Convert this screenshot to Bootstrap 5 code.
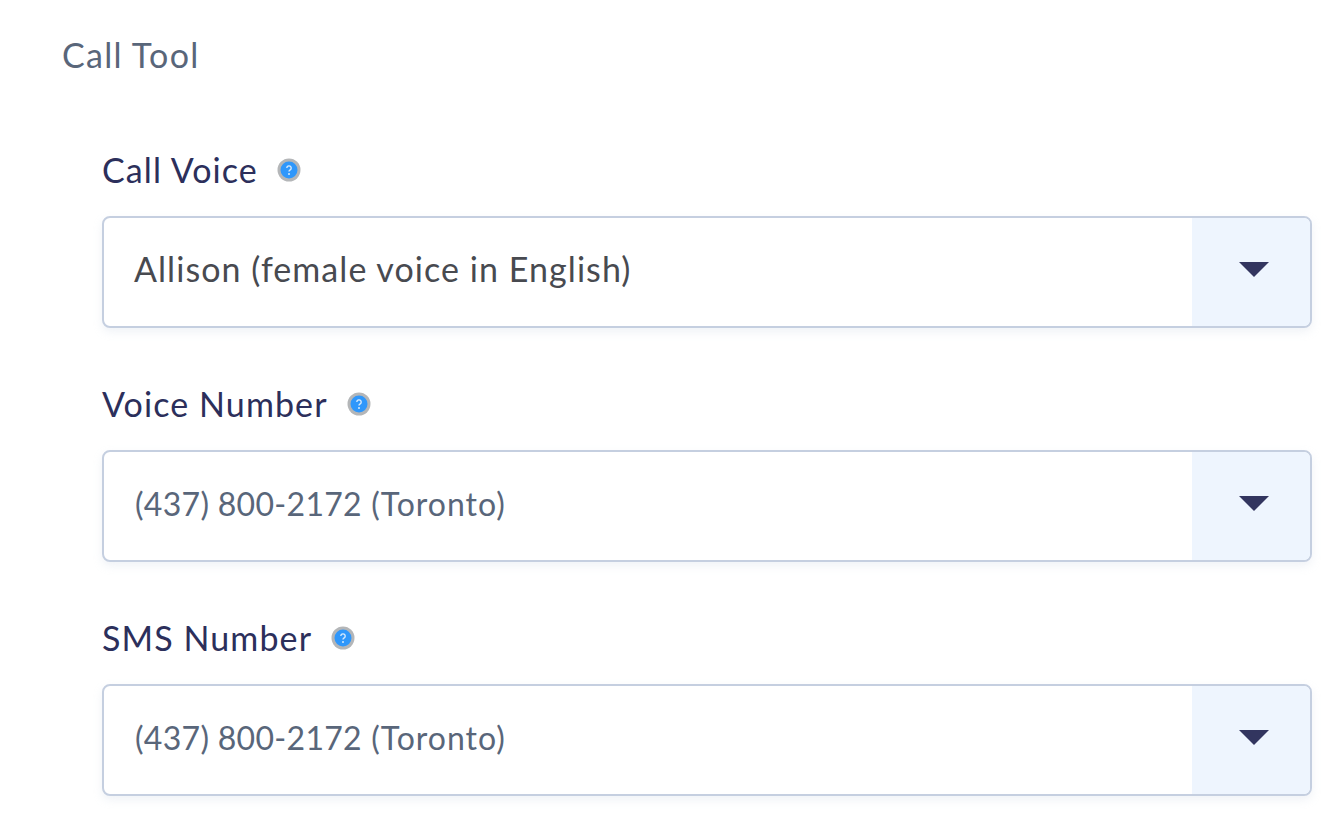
<!DOCTYPE html>
<html lang="en">
<head>
<meta charset="utf-8">
<title>Call Tool</title>
<link href="https://cdn.jsdelivr.net/npm/bootstrap@5.3.0/dist/css/bootstrap.min.css" rel="stylesheet">
<style>
html, body { height: 100%; }
body { font-family: Lato, "Open Sans", sans-serif; background: #fff; overflow: hidden; }
.tool-wrap { padding: 33px 32px 0 62px; }
.tool-title { font-size: 34px; line-height: 44px; font-weight: 400; color: #59667a; margin: 0 0 71px; letter-spacing: 1.3px; }
.tool-fields { margin-left: 40px; }
.field-block { margin-bottom: 54px; }
.field-head { height: 44px; margin-bottom: 24px; gap: 19px; }
.field-label { font-size: 34px; line-height: 44px; color: #2c2f5b; margin: 0; letter-spacing: 1.1px; }
.help-dot { width: 24px; height: 24px; flex: none; display: block; }
.pick-group { height: 112px; border: 2px solid #c5cfe0; border-radius: 8px; overflow: hidden; box-shadow: 0 4px 8px rgba(197, 207, 224, .25); background: #fff; }
.pick-value { padding: 0 0 6px 30px; font-size: 34px; line-height: 44px; color: #59667a; letter-spacing: 1.06px; }
.pick-value.pick-dark { color: #484a50; }
.pick-value.pick-phone { font-size: 32px; letter-spacing: 1px; padding: 0 0 4px 31px; }
.num-run { letter-spacing: .3px; }
.pick-arrow { width: 118px; flex: none; background: #eef5fe; padding: 0 0 6px 6px; }
.pick-arrow svg { width: 30px; height: 15px; display: block; }
</style>
</head>
<body>
<div class="tool-wrap">
  <h1 class="tool-title">Call Tool</h1>
  <div class="tool-fields">
    <div class="field-block">
      <div class="field-head d-flex align-items-center">
        <span class="field-label">Call Voice</span>
        <svg class="help-dot" viewBox="0 0 24 24"><circle cx="12" cy="12" r="11.5" fill="#b4b6b8"/><circle cx="12" cy="12" r="8.5" fill="#2f97fb"/><path d="M9.8 10a2.2 2.2 0 1 1 3.4 1.9c-.8.5-1.2.9-1.2 1.7" fill="none" stroke="#d5e9fd" stroke-width="1.4"/><circle cx="12" cy="16" r="1" fill="#d5e9fd"/></svg>
      </div>
      <div class="pick-group d-flex" role="combobox" aria-expanded="false">
        <div class="pick-value pick-dark flex-grow-1 d-flex align-items-center">Allison (female voice in English)</div>
        <div class="pick-arrow d-flex align-items-center justify-content-center"><svg viewBox="0 0 30 15"><path d="M0 0h30L15 15z" fill="#32355f"/></svg></div>
      </div>
    </div>
    <div class="field-block">
      <div class="field-head d-flex align-items-center">
        <span class="field-label">Voice Number</span>
        <svg class="help-dot" viewBox="0 0 24 24"><circle cx="12" cy="12" r="11.5" fill="#b4b6b8"/><circle cx="12" cy="12" r="8.5" fill="#2f97fb"/><path d="M9.8 10a2.2 2.2 0 1 1 3.4 1.9c-.8.5-1.2.9-1.2 1.7" fill="none" stroke="#d5e9fd" stroke-width="1.4"/><circle cx="12" cy="16" r="1" fill="#d5e9fd"/></svg>
      </div>
      <div class="pick-group d-flex" role="combobox" aria-expanded="false">
        <div class="pick-value pick-phone flex-grow-1 d-flex align-items-center"><span><span class="num-run">(437) 800-2172</span> (Toronto)</span></div>
        <div class="pick-arrow d-flex align-items-center justify-content-center"><svg viewBox="0 0 30 15"><path d="M0 0h30L15 15z" fill="#32355f"/></svg></div>
      </div>
    </div>
    <div class="field-block">
      <div class="field-head d-flex align-items-center">
        <span class="field-label">SMS Number</span>
        <svg class="help-dot" viewBox="0 0 24 24"><circle cx="12" cy="12" r="11.5" fill="#b4b6b8"/><circle cx="12" cy="12" r="8.5" fill="#2f97fb"/><path d="M9.8 10a2.2 2.2 0 1 1 3.4 1.9c-.8.5-1.2.9-1.2 1.7" fill="none" stroke="#d5e9fd" stroke-width="1.4"/><circle cx="12" cy="16" r="1" fill="#d5e9fd"/></svg>
      </div>
      <div class="pick-group d-flex" role="combobox" aria-expanded="false">
        <div class="pick-value pick-phone flex-grow-1 d-flex align-items-center"><span><span class="num-run">(437) 800-2172</span> (Toronto)</span></div>
        <div class="pick-arrow d-flex align-items-center justify-content-center"><svg viewBox="0 0 30 15"><path d="M0 0h30L15 15z" fill="#32355f"/></svg></div>
      </div>
    </div>
  </div>
</div>
<script src="https://cdn.jsdelivr.net/npm/bootstrap@5.3.0/dist/js/bootstrap.bundle.min.js"></script>
</body>
</html>
